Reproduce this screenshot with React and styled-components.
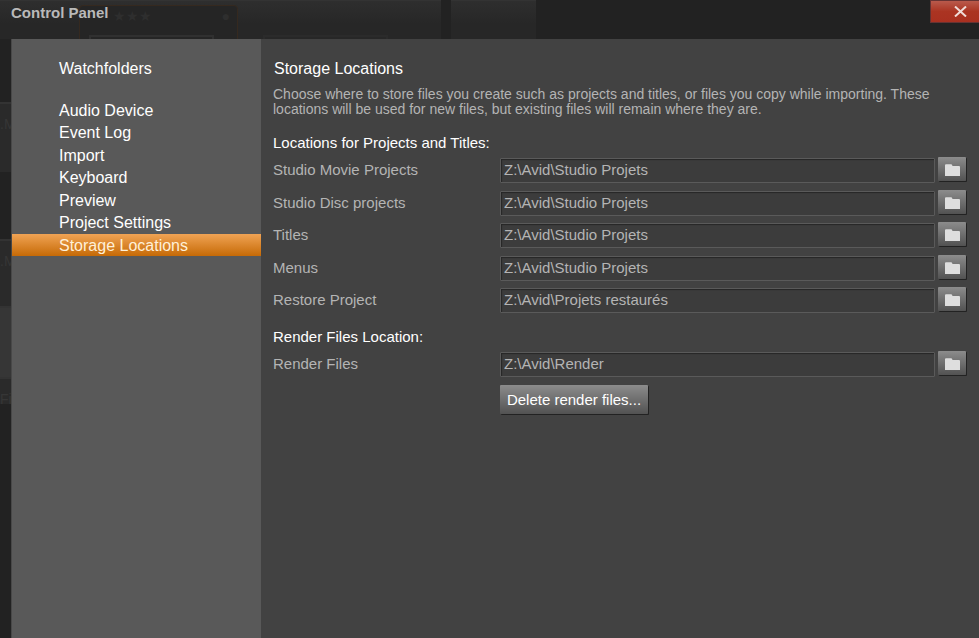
import { useState } from 'react';
import styled, { createGlobalStyle } from 'styled-components';

const GlobalStyle = createGlobalStyle`
	* {
		box-sizing: border-box;
	}

	body {
		margin: 0;
		background: #222;
		font-family: 'Liberation Sans', Arial, sans-serif;
		font-size: 15px;
		color: #b4b4b4;
	}

	button,
	input {
		font: inherit;
	}
`;

const Window = styled.div`
	position: relative;
	display: flex;
	flex-direction: column;
	min-height: 100vh;
	overflow: hidden;
`;

// dimmed library behind the dialog
const Backdrop = styled.div`
	position: absolute;
	inset: 0;
	overflow: hidden;
	color: #363636;
`;

const Shelf = styled.div`
	position: absolute;
	top: 0;
	left: ${({ $left }) => $left}px;
	width: ${({ $width }) => $width}px;
	height: 39px;
	background: linear-gradient(#2e2e2e, #272727 60%);
	border-top: 1px solid #333;
`;

const Clip = styled.div`
	position: absolute;
	top: ${({ $top }) => $top}px;
	left: 0;
	width: 12px;
	height: ${({ $height }) => $height}px;
	padding-top: 12px;
	background: ${({ $color }) => $color || '#2a2a2a'};
	border-top: 2px solid #333;
	font-size: 14px;
	line-height: 16px;
	white-space: nowrap;
	overflow: hidden;
`;

const SelectedClip = styled.div`
	position: absolute;
	top: 5px;
	left: 79px;
	width: 159px;
	height: 60px;
	padding: 3px 7px 0 33px;
	display: flex;
	justify-content: space-between;
	border: 1px solid #35291f;
	border-radius: 4px;
	background: #252525;
	color: #2e2e2e;
	font-size: 14px;
	line-height: 14px;
`;

const Thumb = styled.div`
	position: absolute;
	top: 35px;
	left: ${({ $left }) => $left}px;
	width: ${({ $width }) => $width}px;
	height: 10px;
	border: 2px solid ${({ $color }) => $color};
`;

const Header = styled.header`
	position: relative;
	display: flex;
	justify-content: space-between;
	align-items: flex-start;
	height: 39px;
	padding-left: 11px;

	& h1 {
		margin: 4px 0 0 0;
		font-size: 15px;
		line-height: 18px;
		color: #b9b9b9;
	}
`;

const CloseButton = styled.button`
	display: flex;
	justify-content: center;
	align-items: center;
	width: 49px;
	height: 23px;
	padding: 0 0 0 10px;
	border: 1px solid #633;
	border-right: 0;
	background: linear-gradient(#b95a4c, #ab3422 50%, #a93020);
	color: #f0dcd8;
`;

const Dialog = styled.div`
	position: relative;
	flex: 1;
	display: flex;
	margin-left: 11px;
	border-left: 1px solid #484848;
`;

const Sidebar = styled.nav`
	flex: 0 0 249px;
	padding-top: 18px;
	background: #595959;

	& ul {
		margin: 0;
		padding: 0;
		list-style: none;
	}

	& ul + ul {
		margin-top: 20px;
	}

	& li:nth-child(even) {
		padding-bottom: 1px;
	}
`;

const NavLink = styled.a`
	display: block;
	height: 22px;
	padding-left: 47px;
	font-size: 16px;
	line-height: 23px;
	color: ${({ $active }) => ($active ? '#fff0d8' : '#fff')};
	background: ${({ $active }) => ($active ? 'linear-gradient(#f0a354, #c66a06)' : 'none')};
	text-decoration: none;
`;

const Content = styled.main`
	flex: 1;
	min-width: 0;
	padding: 19px 12px 20px 12px;
	background: #424242;

	& h2 {
		margin: 0 0 7px 1px;
		font-size: 16px;
		line-height: 22px;
		font-weight: normal;
		color: #fff;
	}

	& p {
		max-width: 660px;
		margin: 0 0 17px 0;
		font-size: 14px;
		line-height: 15px;
	}
`;

const Section = styled.section`
	margin: 0 0 12px 0;

	& h3 {
		margin: 0 0 3px 0;
		font-size: 15px;
		line-height: 18px;
		font-weight: normal;
		color: #fff;
	}
`;

const Row = styled.div`
	display: grid;
	grid-template-columns: 227px 1fr 32px;
	align-items: center;
	height: 32px;
	margin-top: -1px;

	& + & {
		margin-top: 0;
	}

	&:nth-of-type(even) {
		margin-top: 1px;
	}

	& label {
		padding-bottom: 2px;
	}
`;

const PathInput = styled.input`
	width: 100%;
	height: 25px;
	padding: 0 3px 1px 3px;
	border: 1px solid #5a5a5a;
	border-radius: 1px;
	background: #3c3c3c;
	box-shadow: inset 1px 1px 1px #262626;
	color: #b4b4b4;
	outline: none;
`;

const GreyButton = styled.button`
	display: flex;
	justify-content: center;
	align-items: center;
	width: ${({ $width }) => $width}px;
	height: ${({ $height }) => $height}px;
	padding: 0;
	border: 0;
	border-radius: 1px;
	background: linear-gradient(#8c8c8c, #525252);
	box-shadow: 1px 1px 0 #222;
	color: #fff;
`;

const BrowseButton = styled(GreyButton)`
	margin: 0 0 3px 3px;
	padding-top: 2px;
`;

const Actions = styled.div`
	padding: 5px 0 0 227px;
`;

const FolderIcon = () => (
	<svg width="15" height="12" viewBox="0 0 15 12" fill="#dedede" aria-hidden="true">
		<path d="M0 1.2Q0 .2 1 .2H6Q7 .2 7.2 1.2L7.5 2H14Q15 2 15 3V12H0Z" />
	</svg>
);

const CloseIcon = () => (
	<svg width="13" height="11" viewBox="0 0 13 11" aria-hidden="true">
		<path d="M1 .5L12 10.5M12 .5L1 10.5" stroke="currentColor" strokeWidth="2" />
	</svg>
);

const pages = [
	'Audio Device',
	'Event Log',
	'Import',
	'Keyboard',
	'Preview',
	'Project Settings',
	'Storage Locations',
];

const projectLocations = [
	{ id: 'movie', label: 'Studio Movie Projects', path: 'Z:\\Avid\\Studio Projets' },
	{ id: 'disc', label: 'Studio Disc projects', path: 'Z:\\Avid\\Studio Projets' },
	{ id: 'titles', label: 'Titles', path: 'Z:\\Avid\\Studio Projets' },
	{ id: 'menus', label: 'Menus', path: 'Z:\\Avid\\Studio Projets' },
	{ id: 'restore', label: 'Restore Project', path: 'Z:\\Avid\\Projets restaurés' },
];

const Location = ({ id, label, path }) => {
	const [value, setValue] = useState(path);

	return (
		<Row>
			<label htmlFor={id}>{label}</label>
			<PathInput
				id={id}
				type="text"
				value={value}
				onChange={(e) => setValue(e.target.value)}
			/>
			<BrowseButton type="button" $width={28} $height={24} aria-label={`Browse ${label}`}>
				<FolderIcon />
			</BrowseButton>
		</Row>
	);
};

const App = () => {
	const [active, setActive] = useState('Storage Locations');

	const renderLink = (page) => (
		<li key={page}>
			<NavLink
				href="#"
				$active={page === active}
				onClick={(e) => {
					e.preventDefault();
					setActive(page);
				}}
			>
				{page}
			</NavLink>
		</li>
	);

	return (
		<Window>
			<GlobalStyle />
			<Backdrop aria-hidden="true">
				<Shelf $left={0} $width={441} />
				<Shelf $left={451} $width={85} />
				<SelectedClip>
					<span>★★★</span>
					<span>●</span>
				</SelectedClip>
				<Thumb $left={89} $width={125} $color="#303030" />
				<Thumb $left={263} $width={125} $color="#2b2b2b" />
				<Clip $top={102} $height={70}>.M</Clip>
				<Clip $top={239} $height={67}>.M</Clip>
				<Clip $top={306} $height={71} $color="#363636" />
				<Clip $top={377} $height={27}>Fi</Clip>
			</Backdrop>
			<Header>
				<h1>Control Panel</h1>
				<CloseButton type="button" aria-label="Close">
					<CloseIcon />
				</CloseButton>
			</Header>
			<Dialog>
				<Sidebar>
					<ul>{renderLink('Watchfolders')}</ul>
					<ul>{pages.map(renderLink)}</ul>
				</Sidebar>
				<Content>
					<h2>Storage Locations</h2>
					<p>
						Choose where to store files you create such as projects and titles, or files
						you copy while importing. These locations will be used for new files, but
						existing files will remain where they are.
					</p>
					<Section>
						<h3>Locations for Projects and Titles:</h3>
						{projectLocations.map((item) => (
							<Location key={item.id} {...item} />
						))}
					</Section>
					<Section>
						<h3>Render Files Location:</h3>
						<Location id="render" label="Render Files" path="Z:\Avid\Render" />
						<Actions>
							<GreyButton type="button" $width={148} $height={29}>
								Delete render files...
							</GreyButton>
						</Actions>
					</Section>
				</Content>
			</Dialog>
		</Window>
	);
};

export default App;
